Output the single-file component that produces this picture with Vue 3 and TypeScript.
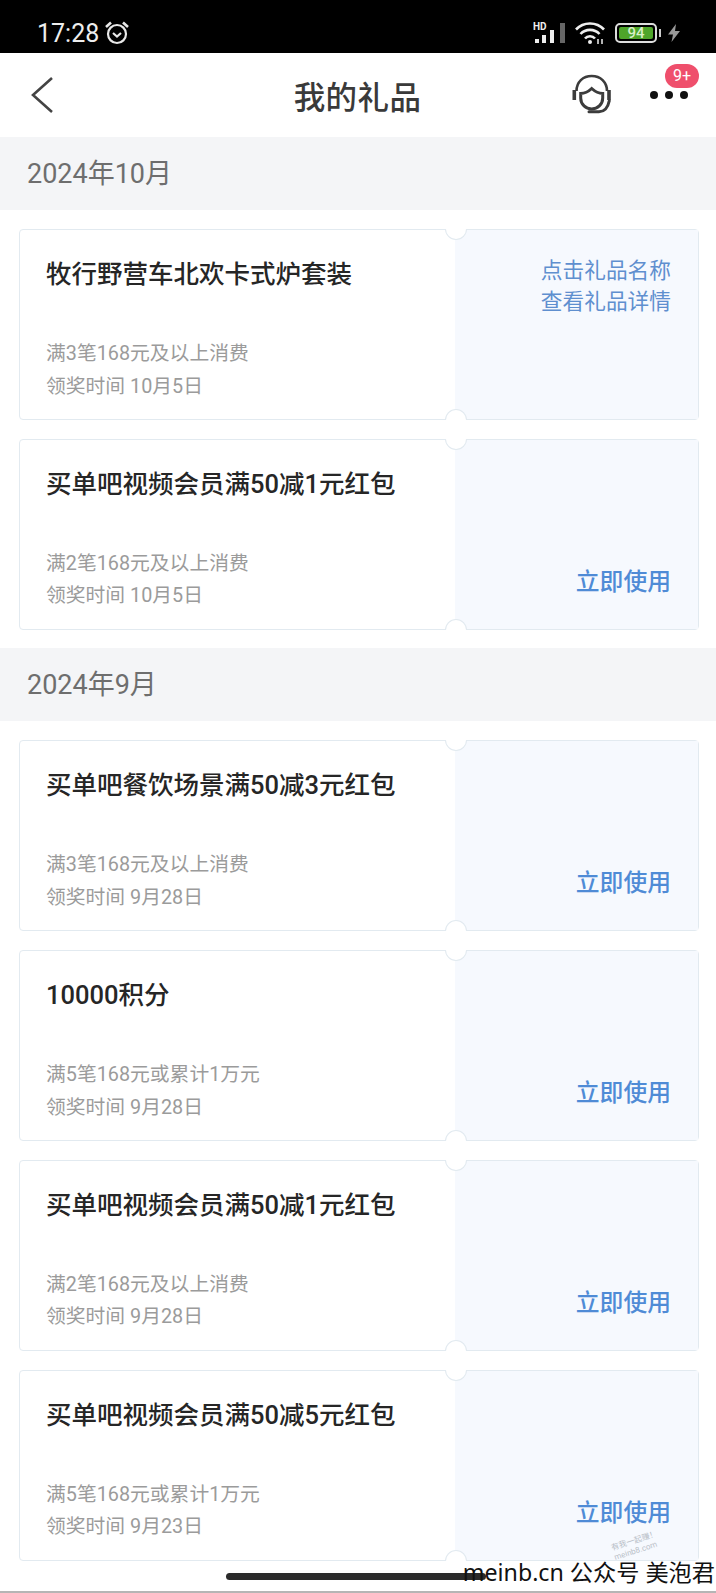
<script setup lang="ts">
interface Gift {
  title: string;
  cond: string;
  date: string;
  tip?: boolean;
}

const sections: { month: string; gifts: Gift[] }[] = [
  {
    month: '2024年10月',
    gifts: [
      { title: '牧行野营车北欢卡式炉套装', cond: '满3笔168元及以上消费', date: '领奖时间 10月5日', tip: true },
      { title: '买单吧视频会员满50减1元红包', cond: '满2笔168元及以上消费', date: '领奖时间 10月5日' },
    ],
  },
  {
    month: '2024年9月',
    gifts: [
      { title: '买单吧餐饮场景满50减3元红包', cond: '满3笔168元及以上消费', date: '领奖时间 9月28日' },
      { title: '10000积分', cond: '满5笔168元或累计1万元', date: '领奖时间 9月28日' },
      { title: '买单吧视频会员满50减1元红包', cond: '满2笔168元及以上消费', date: '领奖时间 9月28日' },
      { title: '买单吧视频会员满50减5元红包', cond: '满5笔168元或累计1万元', date: '领奖时间 9月23日' },
    ],
  },
];
</script>

<template>
  <div class="page">
    <div class="status">
      <div class="status-left">
        <span class="time">17:28</span>
        <svg width="26" height="26" viewBox="0 0 26 26" fill="none" stroke="#e8e8e8" stroke-width="2.200">
          <circle cx="13" cy="14" r="9" />
          <path d="M2 7 7 2.500M24 7 19 2.500" stroke-width="2.600" />
          <path d="M9 13 13 16.500 17 13" />
        </svg>
      </div>
      <div class="status-right">
        <svg width="33" height="24" viewBox="0 0 33 24">
          <text x="0" y="9" class="hd">HD</text>
          <rect x="2" y="18" width="4" height="4" fill="#eee" />
          <rect x="9" y="14" width="4" height="8" fill="#eee" />
          <rect x="17" y="9" width="4" height="13" fill="#eee" />
          <rect x="27" y="2" width="5" height="20" fill="#666" />
        </svg>
        <svg width="31" height="24" viewBox="0 0 31 24" fill="none" stroke="#eee" stroke-width="2.600">
          <path d="M1 8.500C8.500 .5 21.500 .5 29 8.500" />
          <path d="M5.500 13C10.500 7.500 19.500 7.500 24.500 13" />
          <path d="M10 17.500C12.500 14.500 17.500 14.500 20 17.500" />
          <circle cx="15" cy="21" r="2" fill="#eee" stroke="none" />
          <path d="M23 23V18M27 23V18" stroke-width="1.500" />
        </svg>
        <div class="battery"><span>94</span></div>
        <i class="battery-tip"></i>
        <svg width="14" height="20" viewBox="0 0 14 20">
          <path d="M9 1 1 11.500H6L4.500 19 13 8H8Z" fill="#999" />
        </svg>
      </div>
    </div>

    <div class="nav">
      <svg class="back" width="24" height="38" viewBox="0 0 24 38" fill="none" stroke="#444" stroke-width="2.600">
        <path d="M22 2 3 19 22 36" />
      </svg>
      <div class="nav-title">我的礼品</div>
      <div class="nav-icons">
        <svg width="42" height="42" viewBox="0 0 42 42" fill="none" stroke="#3c3c3c" stroke-width="2.600">
          <path d="M4.500 17C4.500 8 11 2 19.700 2S35 8 35 17" />
          <path d="M2.300 16V26M37 16V26" stroke-width="3.600" />
          <path d="M8.700 19.500C13 19.500 16.500 17.500 19.700 14.500C23 17.500 26.500 19.500 30.700 19.500V24C30.700 30.500 25.500 35 19.700 35S8.700 30.500 8.700 24Z" stroke-width="3" />
          <path d="M37.300 26.700C36 33 32.500 37.700 27 37.700H17" stroke-width="3" stroke-linecap="round" />
        </svg>
        <div class="more">
          <i></i><i></i><i></i>
          <span class="badge">9+</span>
        </div>
      </div>
    </div>

    <template v-for="s in sections" :key="s.month">
      <div class="month">{{ s.month }}</div>
      <div class="list">
        <div v-for="g in s.gifts" :key="g.title + g.date" class="card">
          <div class="info">
            <div class="title">{{ g.title }}</div>
            <div class="meta">
              <div>{{ g.cond }}</div>
              <div>{{ g.date }}</div>
            </div>
          </div>
          <div class="side" :class="{ 'side-tip': g.tip }">
            <template v-if="g.tip">
              <div>点击礼品名称</div>
              <div>查看礼品详情</div>
            </template>
            <span v-else class="use">立即使用</span>
          </div>
          <i class="notch notch-top"></i>
          <i class="notch notch-bottom"></i>
        </div>
      </div>
    </template>

    <div class="foot">
      <div class="home"></div>
    </div>
    <div class="stamp">有我一起赚！<br />meinb8.com</div>
    <div class="mark">meinb.cn 公众号 美泡君</div>
  </div>
</template>

<style>
html, body {
  margin: 0;
  background: #fff;
}
</style>

<style scoped>
.page {
  position: relative;
  width: 716px;
  height: 1593px;
  overflow: hidden;
  background: #fff;
  font-family: Roboto, "Noto Sans CJK SC", sans-serif;
}

.status {
  height: 53px;
  background: #000;
  display: flex;
  justify-content: space-between;
  align-items: center;
  padding: 13px 35px 0 37px;
  box-sizing: border-box;
  color: #eee;
}

.status-left {
  display: flex;
  align-items: center;
  gap: 5px;
}

.time {
  font-size: 25px;
}

.status-right {
  display: flex;
  align-items: center;
  gap: 9px;
}

.hd {
  font-size: 10px;
  font-weight: 700;
  fill: #eee;
  font-family: Roboto, sans-serif;
}

.battery {
  width: 42px;
  height: 20px;
  box-sizing: border-box;
  border: 2px solid #ddd;
  border-radius: 5px;
  padding: 2px;
  display: flex;
}

.battery span {
  flex: 1;
  background: #4ea52a;
  color: #d8f0c8;
  font-size: 15px;
  line-height: 12px;
  text-align: center;
  border-radius: 2px;
  font-weight: 500;
}

.battery-tip {
  width: 2px;
  height: 8px;
  margin-left: -7px;
  margin-right: -3px;
  background: #ccc;
}

.nav {
  height: 84px;
  position: relative;
  display: flex;
  align-items: center;
  justify-content: space-between;
  padding: 0 28px 0 30px;
}

.back {
  display: block;
}

.nav-title {
  position: absolute;
  left: 0;
  right: 0;
  text-align: center;
  font-size: 31.500px;
  color: #3a3a3a;
  font-weight: 500;
  letter-spacing: 0.4px;
  padding-right: 1px;
}

.nav-icons {
  display: flex;
  align-items: center;
  gap: 36px;
  position: relative;
  z-index: 1;
}

.more {
  position: relative;
  display: flex;
  gap: 7px;
}

.more i {
  width: 8px;
  height: 8px;
  border-radius: 50%;
  background: #111;
  position: relative;
  z-index: 1;
}

.badge {
  position: absolute;
  left: 15px;
  top: -27px;
  width: 34px;
  height: 24px;
  border-radius: 12px;
  background: #ef4f6c;
  color: #fff;
  font-size: 16px;
  line-height: 24px;
  text-align: center;
}

.month {
  height: 73px;
  line-height: 75px;
  background: #f4f5f7;
  color: #6e6e6e;
  font-size: 27px;
  padding-left: 27px;
}

.list {
  display: flex;
  flex-direction: column;
  gap: 18.800px;
  padding: 19px 17px 18.500px 19px;
}

.card {
  position: relative;
  height: 191px;
  box-sizing: border-box;
  border: 1px solid #e2eaf0;
  border-radius: 4px;
  display: flex;
}

.info {
  flex: 1;
  padding: 25px 0 0 26px;
  display: flex;
  flex-direction: column;
  justify-content: space-between;
}

.title {
  font-size: 25.500px;
  line-height: 38px;
  font-weight: 500;
  color: #262626;
}

.meta {
  font-size: 19.800px;
  line-height: 32.500px;
  color: #9b9b9b;
  padding-bottom: 16px;
}

.side {
  width: 243px;
  box-sizing: border-box;
  background: #f6f9fe;
  padding: 0 27px 30px 0;
  display: flex;
  flex-direction: column;
  align-items: flex-end;
  justify-content: flex-end;
}

.side-tip {
  justify-content: flex-start;
  padding-top: 25px;
  font-size: 21.700px;
  line-height: 31px;
  color: #5f8fcf;
}

.use {
  font-size: 23.800px;
  line-height: 34px;
  font-weight: 500;
  color: #4f8bd6;
}

.notch {
  position: absolute;
  left: 425px;
  width: 22px;
  height: 11px;
  box-sizing: border-box;
  background: #fff;
  border: 1px solid #e2eaf0;
}

.notch-top {
  top: -1px;
  border-top: 0;
  border-radius: 0 0 11px 11px;
}

.notch-bottom {
  bottom: -1px;
  border-bottom: 0;
  border-radius: 11px 11px 0 0;
}

.foot {
  position: absolute;
  left: 0;
  right: 0;
  bottom: 0;
  height: 32px;
  background: #fff;
  border-bottom: 2px solid #b5b5b5;
  box-sizing: border-box;
}

.home {
  position: absolute;
  left: 226px;
  top: 12px;
  width: 260px;
  height: 7px;
  background: #2b2b2b;
  border-radius: 4px;
}

.mark {
  position: absolute;
  right: 1px;
  top: 1557px;
  font-size: 23.200px;
  line-height: 30px;
  color: #111;
  white-space: nowrap;
  font-family: "Noto Sans", "Noto Sans CJK SC", sans-serif;
}

.stamp {
  position: absolute;
  left: 612px;
  top: 1536px;
  font-size: 8px;
  line-height: 10px;
  color: #b9c0c8;
  transform: rotate(-18deg);
}
</style>
